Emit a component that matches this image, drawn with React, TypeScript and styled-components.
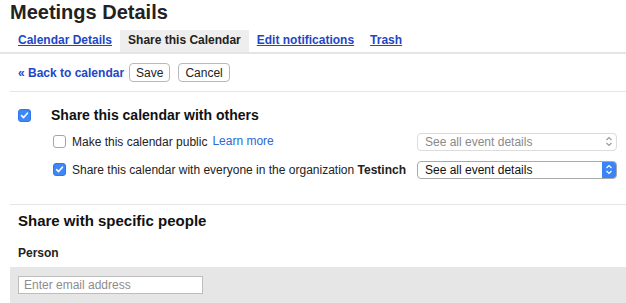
import React from "react";
import styled, { createGlobalStyle } from "styled-components";

const GlobalStyle = createGlobalStyle`
    body {
        margin: 0;
        background: #ffffff;
        font-family: "Liberation Sans", Arial, sans-serif;
        color: #222;
    }
`;

const Page = styled.div`
    width: 626px;
    height: 303px;
    overflow: hidden;
`;

const Title = styled.h1`
    margin: 0;
    padding: 1px 0 0 10px;
    height: 29px;
    font-size: 20px;
    font-weight: bold;
    line-height: 22px;
    color: #222;
`;

const TabBar = styled.div`
    display: flex;
    padding-left: 10px;
    border-bottom: 2px solid #e5e5e5;
`;

const Tab = styled.a<{ $active?: boolean }>`
    display: block;
    padding: 0 8px;
    height: 22px;
    line-height: 21px;
    font-size: 12px;
    font-weight: bold;
    color: ${(p) => (p.$active ? "#222" : "#2346c6")};
    text-decoration: ${(p) => (p.$active ? "none" : "underline")};
    background: ${(p) => (p.$active ? "#eeeeee" : "transparent")};
    cursor: pointer;
`;

const Content = styled.div`
    margin-left: 10px;
`;

const ActionRow = styled.div`
    display: flex;
    align-items: center;
    gap: 5px;
    padding: 9px 8px;
    height: 19px;
    box-sizing: content-box;
    border-bottom: 1px solid #e5e5e5;
`;

const BackLink = styled.a`
    font-size: 12px;
    font-weight: bold;
    color: #2346c6;
`;

const Button = styled.button`
    height: 19px;
    padding: 0 6px;
    font-family: "Liberation Sans", Arial, sans-serif;
    font-size: 12px;
    color: #222;
    background: #fff;
    border: 1px solid #b9b9b9;
    border-radius: 4px;
    & + & {
        margin-left: 3px;
    }
`;

const ShareSection = styled.div`
    padding: 15px 8px 0;
    height: 97px;
    border-bottom: 1px solid #e5e5e5;
    box-sizing: content-box;
`;

const MainRow = styled.div`
    display: flex;
    align-items: center;
    height: 16px;
`;

const MainLabel = styled.span`
    font-size: 14px;
    font-weight: bold;
    color: #111;
    margin-left: 20px;
`;

const OptionRow = styled.div`
    display: flex;
    align-items: center;
    padding-left: 35px;
    height: 19px;
    margin-top: 9px;
`;

const OptionLabel = styled.span`
    font-size: 12px;
    color: #222;
    margin-left: 6px;
    width: 345px;
    white-space: nowrap;
`;

const LearnMore = styled.a`
    color: #2c67d6;
    margin-left: 5px;
    position: relative;
    top: -1px;
`;

const Box = styled.span<{ $checked?: boolean }>`
    display: inline-flex;
    align-items: center;
    justify-content: center;
    width: 13px;
    height: 13px;
    box-sizing: border-box;
    border-radius: 3px;
    background: ${(p) => (p.$checked ? "#3d87f6" : "#fff")};
    border: 1px solid ${(p) => (p.$checked ? "#2f77e8" : "#a6a6a6")};
    flex-shrink: 0;
`;

const SelectBox = styled.div<{ $disabled?: boolean }>`
    display: flex;
    align-items: center;
    justify-content: space-between;
    width: 200px;
    height: 18px;
    box-sizing: border-box;
    border: 1px solid ${(p) => (p.$disabled ? "#dcdcdc" : "#a9a9a9")};
    border-radius: 4px;
    background: #fff;
    font-size: 12px;
    color: ${(p) => (p.$disabled ? "#8a8a8a" : "#111")};
    padding-left: 7px;
    overflow: hidden;
`;

const Stepper = styled.span<{ $active?: boolean }>`
    display: flex;
    align-items: center;
    justify-content: center;
    width: 14px;
    height: 100%;
    background: ${(p) => (p.$active ? "#3a84f5" : "transparent")};
`;

const PeopleSection = styled.div`
    padding: 7px 8px 0;
    height: 55px;
`;

const SectionTitle = styled.h2`
    margin: 0;
    font-size: 15px;
    font-weight: bold;
    color: #111;
    line-height: 18px;
`;

const FieldLabel = styled.div`
    margin-top: 16px;
    font-size: 12px;
    line-height: 14px;
    font-weight: bold;
    color: #222;
`;

const InputBand = styled.div`
    background: #e6e6e6;
    padding: 9px 8px 10px;
    height: 36px;
    box-sizing: border-box;
`;

const EmailInput = styled.input`
    display: block;
    width: 185px;
    height: 18px;
    box-sizing: border-box;
    border: 1px solid #bdbdbd;
    background: #fff;
    font-family: "Liberation Sans", Arial, sans-serif;
    font-size: 12px;
    padding: 0 5px;
    &::placeholder {
        color: #8d8d8d;
    }
`;

const Check = ({ checked }: { checked?: boolean }) => (
    <Box $checked={checked}>
        {checked ? (
            <svg width="9" height="9" viewBox="0 0 9 9">
                <path d="M1.6 4.6 L3.6 6.6 L7.4 2.2" fill="none" stroke="#fff" strokeWidth="1.6" strokeLinecap="round" strokeLinejoin="round" />
            </svg>
        ) : null}
    </Box>
);

const Select = ({ disabled }: { disabled?: boolean }) => (
    <SelectBox $disabled={disabled}>
        <span>See all event details</span>
        <Stepper $active={!disabled}>
            <svg width="8" height="11" viewBox="0 0 8 11">
                <path d="M1.5 4 L4 1.5 L6.5 4 M1.5 7 L4 9.5 L6.5 7" fill="none" stroke={disabled ? "#9a9a9a" : "#fff"} strokeWidth="1.2" />
            </svg>
        </Stepper>
    </SelectBox>
);

const App = () => {
    return (
        <Page>
            <GlobalStyle />
            <Title>Meetings Details</Title>
            <TabBar>
                <Tab>Calendar Details</Tab>
                <Tab $active>Share this Calendar</Tab>
                <Tab>Edit notifications</Tab>
                <Tab>Trash</Tab>
            </TabBar>
            <Content>
                <ActionRow>
                    <BackLink>« Back to calendar</BackLink>
                    <Button>Save</Button>
                    <Button>Cancel</Button>
                </ActionRow>
                <ShareSection>
                    <MainRow>
                        <Check checked />
                        <MainLabel>Share this calendar with others</MainLabel>
                    </MainRow>
                    <OptionRow>
                        <Check />
                        <OptionLabel>
                            Make this calendar public<LearnMore>Learn more</LearnMore>
                        </OptionLabel>
                        <Select disabled />
                    </OptionRow>
                    <OptionRow>
                        <Check checked />
                        <OptionLabel>
                            Share this calendar with everyone in the organization <b>Testinch</b>
                        </OptionLabel>
                        <Select />
                    </OptionRow>
                </ShareSection>
                <PeopleSection>
                    <SectionTitle>Share with specific people</SectionTitle>
                    <FieldLabel>Person</FieldLabel>
                </PeopleSection>
                <InputBand>
                    <EmailInput placeholder="Enter email address" />
                </InputBand>
            </Content>
        </Page>
    );
};

export default App;
